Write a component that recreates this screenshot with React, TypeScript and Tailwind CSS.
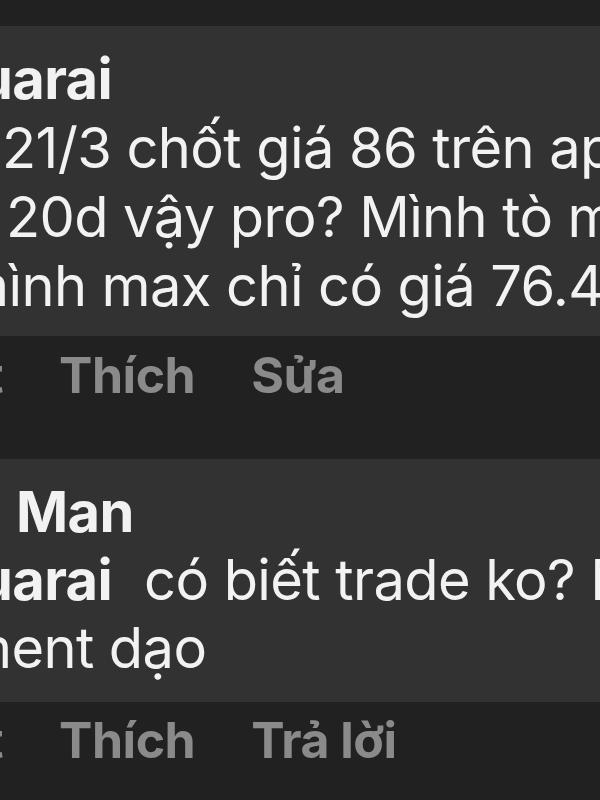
export default function App() {
  return (
    <div className="w-[600px] h-[800px] overflow-hidden bg-[#212121] font-['Inter','Noto_Sans',sans-serif] text-[#f2f2f2]">
      <div className="h-[26px]" />

      {/* first comment bubble */}
      <div className="bg-[#323232] h-[310px] pt-[19px] text-[56px] leading-[69px] tracking-[-0.6px] whitespace-nowrap">
        <div className="font-bold -ml-[22px]">uarai</div>
        <div className="ml-[2px]">21/3 chốt giá 86 trên app</div>
        <div className="ml-[6px]">20d vậy pro? Mình tò mò</div>
        <div className="-ml-[40px]">mình max chỉ có giá 76.4</div>
      </div>

      {/* actions */}
      <div className="h-[123px] pt-[9px] flex gap-[56px] text-[50px] leading-[60px] font-bold tracking-[-0.5px] text-[#8a8a8a] whitespace-nowrap">
        <span className="-ml-[107px]">phút</span>
        <span>Thích</span>
        <span>Sửa</span>
      </div>

      {/* second comment bubble */}
      <div className="bg-[#323232] h-[243px] pt-[19px] text-[56px] leading-[68px] tracking-[-0.6px] whitespace-nowrap">
        <div className="font-bold ml-[16px]">Man</div>
        <div className="-ml-[22px]">
          <span className="font-bold">uarai</span>
          <span className="ml-[32px]">có biết trade ko? Mình</span>
        </div>
        <div className="-ml-[37px]">ment dạo</div>
      </div>

      {/* actions */}
      <div className="h-[98px] pt-[8px] flex gap-[56px] text-[50px] leading-[60px] font-bold tracking-[-0.5px] text-[#8a8a8a] whitespace-nowrap">
        <span className="-ml-[107px]">phút</span>
        <span>Thích</span>
        <span>Trả lời</span>
      </div>
    </div>
  );
}
